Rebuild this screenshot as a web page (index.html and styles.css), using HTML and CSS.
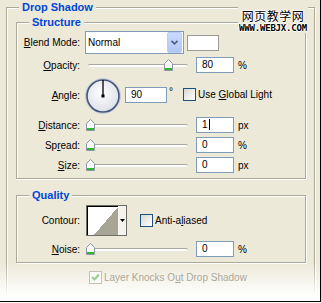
FILE: index.html
```html
<!DOCTYPE html>
<html lang="en">
<head>
  <meta charset="UTF-8">
  <title>Drop Shadow</title>
  <link rel="stylesheet" href="styles.css">
</head>
<body>

<div class="panel">

  <!-- Wasserzeichen oben rechts -->
  <div class="watermark">
    <div class="wm-cn">网页教学网</div>
    <div class="wm-url">WWW.WEBJX.COM</div>
  </div>

  <fieldset class="group outer">
    <legend>Drop Shadow</legend>

    <!-- Structure -->
    <fieldset class="group inner">
      <legend>Structure</legend>

      <div class="row row-blend">
        <span class="lbl"><u>B</u>lend Mode:</span>
        <div class="select">
          <span class="select-text">Normal</span>
          <span class="select-btn">
            <svg width="15" height="21" viewBox="0 0 15 21"><polyline points="4,8.5 7.5,12 11,8.5" fill="none" stroke="#4D6185" stroke-width="2"/></svg>
          </span>
        </div>
        <span class="swatch"></span>
      </div>

      <div class="row row-opacity">
        <span class="lbl"><u>O</u>pacity:</span>
        <div class="slider" style="--v: 0.8">
          <span class="track"></span>
          <span class="thumb"><svg width="9" height="12" viewBox="0 0 9 12"><path d="M.5 11.5V4.5L4.5.5l4 4v7z" fill="#F7F7F4" stroke="#8A98A6"/><rect x="1" y="9" width="7" height="2" fill="#2FB52F"/></svg></span>
        </div>
        <span class="field">80</span>
        <span class="unit">%</span>
      </div>

      <div class="row row-angle">
        <span class="lbl"><u>A</u>ngle:</span>
        <span class="dial">
          <svg width="36" height="36" viewBox="0 0 36 36">
            <defs>
              <radialGradient id="dialFill" cx="45%" cy="40%" r="65%">
                <stop offset="0" stop-color="#FFFFFF"/>
                <stop offset="1" stop-color="#DADDE6"/>
              </radialGradient>
            </defs>
            <circle cx="18" cy="18" r="17.3" fill="none" stroke="#B8C2D6" stroke-width="1"/>
            <circle cx="18" cy="18" r="16" fill="url(#dialFill)" stroke="#44557A" stroke-width="1.6"/>
            <line x1="18" y1="18" x2="18" y2="2" stroke="#000" stroke-width="1.3"/>
            <rect x="16.5" y="16.5" width="3" height="3" fill="#000"/>
          </svg>
        </span>
        <span class="field field-angle">90</span>
        <span class="deg">°</span>
        <span class="check-item check-global">
          <span class="check"></span>
          <span>Use <u>G</u>lobal Light</span>
        </span>
      </div>

      <div class="row row-distance">
        <span class="lbl"><u>D</u>istance:</span>
        <div class="slider" style="--v: 0">
          <span class="track"></span>
          <span class="thumb"><svg width="9" height="12" viewBox="0 0 9 12"><path d="M.5 11.5V4.5L4.5.5l4 4v7z" fill="#F7F7F4" stroke="#8A98A6"/><rect x="1" y="9" width="7" height="2" fill="#2FB52F"/></svg></span>
        </div>
        <span class="field">1<span class="caret"></span></span>
        <span class="unit">px</span>
      </div>

      <div class="row row-next">
        <span class="lbl">Sp<u>r</u>ead:</span>
        <div class="slider" style="--v: 0">
          <span class="track"></span>
          <span class="thumb"><svg width="9" height="12" viewBox="0 0 9 12"><path d="M.5 11.5V4.5L4.5.5l4 4v7z" fill="#F7F7F4" stroke="#8A98A6"/><rect x="1" y="9" width="7" height="2" fill="#2FB52F"/></svg></span>
        </div>
        <span class="field">0</span>
        <span class="unit">%</span>
      </div>

      <div class="row row-next">
        <span class="lbl"><u>S</u>ize:</span>
        <div class="slider" style="--v: 0">
          <span class="track"></span>
          <span class="thumb"><svg width="9" height="12" viewBox="0 0 9 12"><path d="M.5 11.5V4.5L4.5.5l4 4v7z" fill="#F7F7F4" stroke="#8A98A6"/><rect x="1" y="9" width="7" height="2" fill="#2FB52F"/></svg></span>
        </div>
        <span class="field">0</span>
        <span class="unit">px</span>
      </div>
    </fieldset>

    <!-- Quality -->
    <fieldset class="group inner quality">
      <legend>Quality</legend>

      <div class="row row-contour">
        <span class="lbl">Contour:</span>
        <span class="contour">
          <span class="contour-preview"></span>
          <span class="contour-arrow">
            <svg width="5" height="3" viewBox="0 0 5 3"><polygon points="0,0 5,0 2.5,3" fill="#000"/></svg>
          </span>
        </span>
        <span class="check-item check-anti">
          <span class="check"></span>
          <span>Anti-a<u>l</u>iased</span>
        </span>
      </div>

      <div class="row row-noise">
        <span class="lbl"><u>N</u>oise:</span>
        <div class="slider" style="--v: 0">
          <span class="track"></span>
          <span class="thumb"><svg width="9" height="12" viewBox="0 0 9 12"><path d="M.5 11.5V4.5L4.5.5l4 4v7z" fill="#F7F7F4" stroke="#8A98A6"/><rect x="1" y="9" width="7" height="2" fill="#2FB52F"/></svg></span>
        </div>
        <span class="field">0</span>
        <span class="unit">%</span>
      </div>
    </fieldset>

    <div class="check-item knock">
      <span class="check disabled">
        <svg width="11" height="11" viewBox="0 0 11 11"><polyline points="2,5 4.5,7.5 9,2.5" fill="none" stroke="#93CE93" stroke-width="2"/></svg>
      </span>
      <span>Layer Knocks O<u>u</u>t Drop Shadow</span>
    </div>
  </fieldset>

  <!-- Ausblenden nach unten -->
  <div class="fade"></div>
</div>

</body>
</html>
```

FILE: styles.css
```css
html, body {
  margin: 0;
  background: #fff;
}

body {
  font-family: "Liberation Sans", Arial, sans-serif;
  font-size: 10px;
  color: #000;
}

.panel {
  position: relative;
  width: 321px;
  height: 302px;
  box-sizing: border-box;
  border-right: 1px solid #000;
  border-bottom: 1px solid #000;
  background: #ECE9D8;
  overflow: hidden;
}

/* Gruppenrahmen, eingeprägt */
.group {
  margin: 0;
  padding: 0;
  min-width: 0;
  border: 1px solid #ACA899;
  box-shadow: inset 1px 1px 0 #fff, 1px 1px 0 #fff;
}

.group > legend {
  margin-left: 12px;
  padding: 0 3px;
  font-size: 11px;
  font-weight: bold;
  line-height: 13px;
  color: #0046D5;
  background: #ECE9D8;
}

.outer {
  margin: 1px 5px 0 6px;
  padding-bottom: 12px;
}

.inner {
  margin: 2px 8px 0 9px;
  padding-bottom: 5px;
}

.quality {
  margin-top: 10px;
}

/* Zeilen */
.row {
  display: flex;
  align-items: center;
  height: 16px;
}

.row-blend { height: 23px; margin-top: 2px; }
.row-opacity { margin-top: 3px; }
.row-angle { height: 36px; margin-top: 5px; align-items: flex-start; }
.row-distance { margin-top: 3px; }
.row-next { margin-top: 4px; }
.row-contour { height: 31px; margin-top: 3px; }
.row-noise { margin-top: 5px; }

.lbl {
  flex: none;
  width: 68px;
  box-sizing: border-box;
  padding-right: 5px;
  text-align: right;
  white-space: nowrap;
}

.row-angle .lbl {
  line-height: 36px;
}

/* Dropdown */
.select {
  display: flex;
  width: 99px;
  height: 23px;
  box-sizing: border-box;
  border: 1px solid #7F9DB9;
  background: #fff;
}

.select-text {
  flex: 1;
  padding-left: 2px;
  line-height: 21px;
}

.select-btn {
  width: 15px;
  height: 21px;
  margin-right: 1px;
  box-sizing: border-box;
  border: 1px solid #B9CBF5;
  border-radius: 2px;
  background: linear-gradient(#CAD9FD, #B1C6F6);
  display: flex;
  justify-content: center;
}

.select-btn svg {
  margin-top: -1px;
}

.swatch {
  width: 32px;
  height: 16px;
  margin-left: 3px;
  box-sizing: border-box;
  border: 1px solid #9C9A92;
  background: #fff;
}

/* Schieberegler */
.slider {
  position: relative;
  flex: none;
  width: 104px;
  height: 16px;
  margin-left: 1px;
  display: flex;
  align-items: center;
}

.track {
  flex: 1;
  height: 3px;
  margin: 1px 2px 0 2px;
  border-radius: 2px;
  background: #fff;
  box-shadow: inset 0 1px 0 #A9A79A;
}

.thumb {
  position: absolute;
  top: 2px;
  left: calc(var(--v) * 97px);
  width: 9px;
  height: 12px;
  line-height: 0;
}

/* Eingabefelder */
.field {
  flex: none;
  width: 38px;
  height: 16px;
  margin-left: 6px;
  box-sizing: border-box;
  border: 1px solid #7F9DB9;
  background: #fff;
  padding-left: 5px;
  line-height: 14px;
}

.caret {
  display: inline-block;
  width: 1px;
  height: 11px;
  margin-left: 1px;
  background: #000;
  vertical-align: -2px;
}

.unit {
  margin-left: 4px;
}

/* Winkel */
.dial {
  flex: none;
  width: 36px;
  height: 36px;
  line-height: 0;
}

.field-angle {
  width: 42px;
  margin: 9px 0 0 4px;
}

.deg {
  margin: 6px 0 0 2px;
  line-height: 16px;
}

/* Checkboxen */
.check-item {
  display: flex;
  align-items: center;
  gap: 2px;
  white-space: nowrap;
}

.check {
  flex: none;
  width: 13px;
  height: 13px;
  box-sizing: border-box;
  border: 1px solid #1C5180;
  background: linear-gradient(135deg, #D9D9D2, #FFFFFF);
  line-height: 0;
}

.check.disabled {
  border-color: #C4C2B5;
  background: #FBFBF8;
}

.check-global {
  margin: 10px 0 0 10px;
  line-height: 13px;
}

.check-anti {
  margin-left: 13px;
}

.knock {
  position: relative;
  z-index: 2;
  margin: 8px 0 0 82px;
  height: 13px;
  color: #ACA899;
}

/* Kontur */
.contour {
  flex: none;
  display: flex;
  width: 41px;
  height: 31px;
  margin-left: 1px;
  box-sizing: border-box;
  border: 1px solid #6F6D64;
  background: #fff;
}

.contour-preview {
  width: 31px;
  box-sizing: border-box;
  border-top: 1px solid #000;
  border-left: 1px solid #000;
  background-color: #fff;
  background-image: linear-gradient(to top left, #A8A597 50%, #fff 50%);
  background-size: 24px 100%;
  background-position: right top;
  background-repeat: no-repeat;
}

.contour-arrow {
  flex: 1;
  display: flex;
  align-items: center;
  justify-content: center;
  background: #F4F3EE;
  line-height: 0;
}

/* Wasserzeichen */
.watermark {
  position: absolute;
  top: 6px;
  left: 238px;
  width: 70px;
  height: 27px;
  background: #ECE9D8;
  text-align: center;
  z-index: 3;
}

.wm-cn {
  margin-top: 3px;
  font-family: "Noto Sans CJK SC", sans-serif;
  font-size: 12px;
  line-height: 13px;
  letter-spacing: 0.5px;
  color: #000;
  text-shadow: 1px 0 #fff, -1px 0 #fff, 0 1px #fff, 0 -1px #fff;
}

.wm-url {
  margin-top: 2px;
  font-family: "DejaVu Sans Mono", monospace;
  font-weight: bold;
  font-size: 9px;
  line-height: 9px;
  letter-spacing: -0.2px;
  color: #000;
  text-shadow: 1px 0 #fff, -1px 0 #fff, 0 1px #fff, 0 -1px #fff;
}

.fade {
  position: absolute;
  left: 0;
  right: 0;
  top: 262px;
  height: 40px;
  background: linear-gradient(rgba(255, 255, 255, 0), #fff 34px);
  pointer-events: none;
  z-index: 1;
}
```
